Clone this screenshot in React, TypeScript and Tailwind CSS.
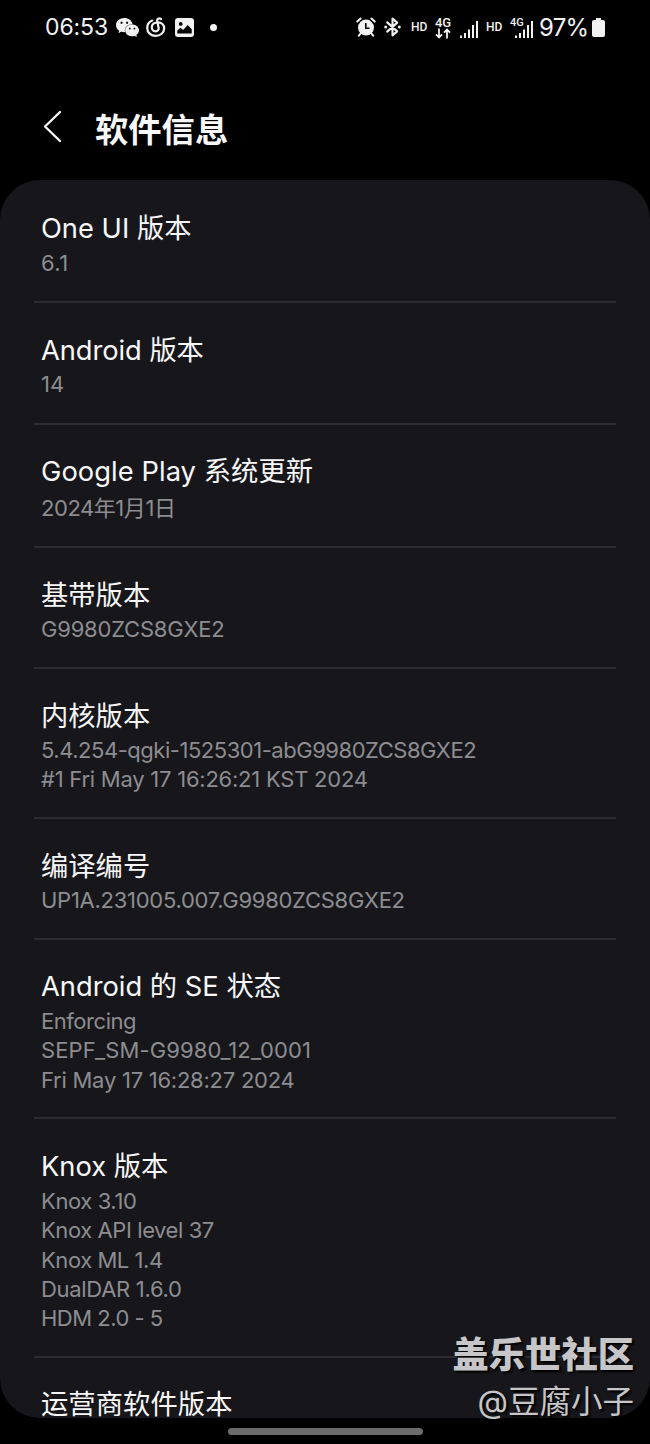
import React from "react";
import { SiWechat } from "react-icons/si";

type Row = {
  title: string;
  titleClass?: string;
  height: string;
  lines: { text: string; className?: string }[];
};

const rows: Row[] = [
  { title: "One UI 版本", height: "h-[123px] pt-[31px]", lines: [{ text: "6.1", className: "tracking-[0.4px]" }] },
  { title: "Android 版本", titleClass: "tracking-[-0.06px] mb-[-1px]", height: "h-[122px] pt-[30px]", lines: [{ text: "14" }] },
  {
    title: "Google Play 系统更新",
    titleClass: "tracking-[0.06px]",
    height: "h-[123px] pt-[29px]",
    lines: [{ text: "2024年1月1日", className: "pt-[2px] tracking-[-0.45px]" }],
  },
  { title: "基带版本", titleClass: "mb-[-1px]", height: "h-[121px] pt-[30px]", lines: [{ text: "G9980ZCS8GXE2", className: "tracking-[-0.2px]" }] },
  {
    title: "内核版本",
    titleClass: "mb-[-1px]",
    height: "h-[150px] pt-[30px]",
    lines: [
      { text: "5.4.254-qgki-1525301-abG9980ZCS8GXE2", className: "tracking-[-0.47px]" },
      { text: "#1 Fri May 17 16:26:21 KST 2024", className: "tracking-[-0.24px]" },
    ],
  },
  {
    title: "编译编号",
    titleClass: "mb-[-1px]",
    height: "h-[121px] pt-[30px]",
    lines: [{ text: "UP1A.231005.007.G9980ZCS8GXE2", className: "tracking-[-0.27px]" }],
  },
  {
    title: "Android 的 SE 状态",
    height: "h-[179px] pt-[29px]",
    lines: [
      { text: "Enforcing", className: "tracking-[-0.45px]" },
      { text: "SEPF_SM-G9980_12_0001", className: "tracking-[0.12px]" },
      { text: "Fri May 17 16:28:27 2024", className: "tracking-[-0.25px]" },
    ],
  },
  {
    title: "Knox 版本",
    height: "h-[239px] pt-[30px]",
    lines: [
      { text: "Knox 3.10", className: "tracking-[-0.4px]" },
      { text: "Knox API level 37", className: "tracking-[-0.42px]" },
      { text: "Knox ML 1.4", className: "tracking-[-0.45px]" },
      { text: "DualDAR 1.6.0", className: "tracking-[-0.3px]" },
      { text: "HDM 2.0 - 5", className: "tracking-[-0.5px]" },
    ],
  },
  { title: "运营商软件版本", titleClass: "tracking-[0.06px]", height: "h-[59px] pt-[29px]", lines: [] },
];

const AlarmIcon = () => (
  <svg className="h-[20px] w-[20px]" viewBox="0 0 20 20" fill="none">
    <circle cx="10" cy="10.6" r="8" fill="#f2f2f2" />
    <path d="M1.3 4.6 4.6 1.6M18.7 4.6 15.4 1.6M4.5 16.5 2.9 18.6M15.5 16.5l1.6 2.1" stroke="#f2f2f2" strokeWidth="2" strokeLinecap="round" />
    <path d="M9.8 6v5.2h3.8" stroke="#000" strokeWidth="1.6" />
  </svg>
);

const BluetoothIcon = () => (
  <svg className="ml-[8px] h-[20px] w-[17px]" viewBox="0 0 17 20" fill="none">
    <path d="M3.2 5.4 13.2 14.4l-4.7 4V1.6l4.7 4-10 9" stroke="#f2f2f2" strokeWidth="2.1" strokeLinejoin="round" strokeLinecap="round" />
    <circle cx="1.7" cy="10" r="1.5" fill="#f2f2f2" />
    <circle cx="15.3" cy="10" r="1.5" fill="#f2f2f2" />
  </svg>
);

const CloudMusicIcon = () => (
  <svg className="ml-[7px] h-[20px] w-[20px]" viewBox="0 0 20 20" fill="none" stroke="#f2f2f2" strokeWidth="2.2" strokeLinecap="round">
    <path d="M6.2 3.6C3 5 1.2 7.7 1.2 10.9c0 4.6 3.7 8 8.4 8s8.6-3.3 8.6-7.6c0-3.6-2.7-6-6.4-6-3.5 0-6 2.1-6 5 0 2.3 1.6 4 3.7 4s3.5-1.5 3.1-3.6L11.2 3.8c-.4-1.9 2-3.2 3.9-1.7" />
  </svg>
);

const ImageIcon = () => (
  <svg className="ml-[9px] h-[19px] w-[19px]" viewBox="0 0 19 19">
    <rect width="19" height="19" rx="3" fill="#f2f2f2" />
    <circle cx="5.7" cy="5.9" r="1.9" fill="#000" />
    <path d="M2.3 15.5v-3l3.2-2.8 2.6 2.3 4.6-5 4 4.2v4.3z" fill="#000" />
  </svg>
);

const DataArrows = () => (
  <svg className="h-[11px] w-[16px]" viewBox="0 0 16 11" fill="none" stroke="#f2f2f2" strokeWidth="1.8">
    <path d="M4 .5v9M1 6.4l3 3 3-3M12 10.5v-9M9 4.6l3-3 3 3" />
  </svg>
);

const SignalIcon = ({ className }: { className: string }) => (
  <svg className={className} viewBox="0 0 18 18" fill="#f2f2f2">
    <rect x="0" y="15.5" width="2" height="2.5" />
    <rect x="4" y="13" width="2" height="5" />
    <rect x="8" y="9.5" width="2" height="8.5" />
    <rect x="12" y="5" width="2" height="13" />
    <rect x="16" y="1" width="2" height="17" />
  </svg>
);

const StatusBar = () => (
  <div className="flex h-[54px] items-center pl-[45px] text-[#f2f2f2]">
    <span className="w-[62px] pt-px text-[23px] tracking-[-0.1px]">06:53</span>
    <SiWechat className="ml-[9px] h-[23px] w-[23px]" />
    <CloudMusicIcon />
    <ImageIcon />
    <span className="ml-[16px] h-[7px] w-[7px] rounded-full bg-[#f2f2f2]" />
    <div className="ml-[139px] flex items-center">
      <AlarmIcon />
      <BluetoothIcon />
      <span className="ml-[10px] w-[16px] font-['Roboto'] text-[12px] font-medium">HD</span>
      <div className="ml-[8px] flex w-[16px] flex-col items-center pt-px">
        <span className="font-['Roboto'] text-[13px] leading-[11px] font-medium">4G</span>
        <DataArrows />
      </div>
      <SignalIcon className="mt-[3px] ml-[9px] h-[18px] w-[18px]" />
      <span className="ml-[8px] w-[16px] font-['Roboto'] text-[12px] font-medium">HD</span>
      <span className="mb-[10px] ml-[8px] w-[14px] font-['Roboto'] text-[11px] leading-[11px] font-medium">4G</span>
      <SignalIcon className="mt-[3px] -ml-[9px] h-[18px] w-[18px]" />
      <span className="ml-[6px] w-[50px] pt-px text-[24px] tracking-[-0.7px]">97%</span>
      <svg className="ml-[3px] h-[19px] w-[13px]" viewBox="0 0 13 19" fill="#f2f2f2">
        <path d="M4 0h5v2h2a2 2 0 0 1 2 2v13a2 2 0 0 1-2 2H2a2 2 0 0 1-2-2V4a2 2 0 0 1 2-2h2z" />
      </svg>
    </div>
  </div>
);

const InfoRow = ({ row, last }: { row: Row; last: boolean }) => (
  <div className={`${row.height} pl-[7px] ${last ? "" : "border-b-2 border-[#2d2d31]"}`}>
    <h2 className={`h-[36px] text-[27.3px] leading-[36px] text-[#f7f7f9] ${row.titleClass ?? ""}`}>{row.title}</h2>
    {row.lines.length > 0 && (
      <div className="pt-[2px]">
        {row.lines.map((line) => (
          <p key={line.text} className={`h-[29.3px] text-[22px] leading-[29.3px] text-[#8d8d91] ${line.className ?? ""}`}>
            {line.text}
          </p>
        ))}
      </div>
    )}
  </div>
);

const App = () => {
  return (
    <div className="relative h-[1444px] w-[650px] overflow-hidden bg-black font-['Inter','Noto_Sans_CJK_SC',sans-serif] whitespace-nowrap">
      <StatusBar />
      <header className="flex h-[126px] items-start pl-[43px]">
        <svg className="mt-[56px] h-[33px] w-[19px]" viewBox="0 0 19 33" fill="none" stroke="#f7f7f9" strokeWidth="2.4" strokeLinecap="round" strokeLinejoin="round">
          <path d="M17 2 2 16.5 17 31" />
        </svg>
        <h1 className="mt-[51px] ml-[33px] text-[33.3px] leading-[50px] font-bold text-[#f7f7f9]">软件信息</h1>
      </header>

      <main className="h-[1238px] rounded-[40px] bg-[#17171b] px-[34px]">
        {rows.map((row, i) => (
          <InfoRow key={row.title} row={row} last={i === rows.length - 1} />
        ))}
      </main>

      <div className="mx-auto mt-[10px] h-[7px] w-[195px] rounded-full bg-[#6c6c6c]" />

      <div className="absolute right-[16px] bottom-[19px] text-right text-[#c6c6c8] [text-shadow:2px_2px_2px_#000]">
        <div className="text-[36.3px] leading-[47px] font-black">盖乐世社区</div>
        <div className="text-[31.5px] leading-[46px]">@豆腐小子</div>
      </div>
    </div>
  );
};

export default App;
